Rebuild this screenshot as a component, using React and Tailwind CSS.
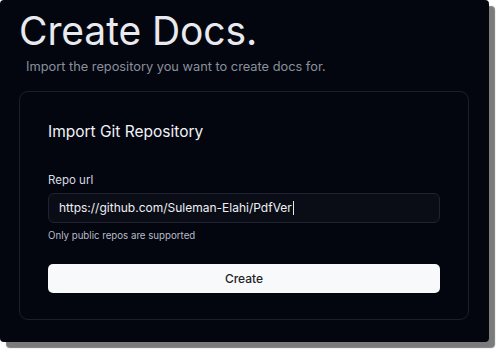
import React from "react";

function App() {
  return (
    <div className="w-[497px] h-[350px] bg-white" style={{ fontFamily: "Inter, 'Liberation Sans', sans-serif" }}>
      <div className="w-[489px] h-[342px] bg-[#03060f] rounded-[4px] shadow-[6px_6px_1px_rgba(90,90,90,0.8)] flex flex-col">
        <h1 className="pl-[19px] pt-[6px] text-[39px] leading-[50px] text-[#e8eaf0] tracking-[-0.1px]">
          Create Docs.
        </h1>
        <p className="pl-[26px] mt-[2px] text-[12.8px] leading-[18px] text-[#8b919c]">
          Import the repository you want to create docs for.
        </p>

        <div className="ml-[19px] mt-[15px] w-[450px] h-[229px] border border-[#1c1f2b] rounded-[9px] px-[28px] pt-[30px]">
          <h2 className="text-[15.5px] leading-[20px] text-[#f1f2f6]">
            Import Git Repository
          </h2>

          <label className="block mt-[30px] text-[11.5px] leading-[16px] text-[#d8dbe2]">
            Repo url
          </label>
          <div className="mt-[5px] h-[30px] w-[392px] border border-[#1f2230] bg-[#0b0d16] rounded-[6px] flex items-center px-[10px]">
            <span className="text-[12px] text-[#eef0f4]">https://github.com/Suleman-Elahi/PdfVer</span>
            <span className="w-px h-[14px] bg-[#e5e7eb] ml-px"></span>
          </div>
          <p className="mt-[6px] text-[9.7px] leading-[14px] text-[#b8bcc6]">
            Only public repos are supported
          </p>

          <button className="mt-[21px] w-[392px] h-[29px] bg-[#f8f9fb] rounded-[5px] text-[12px] font-medium text-[#1f2228] flex items-center justify-center">
            Create
          </button>
        </div>
      </div>
    </div>
  );
}

export default App;
